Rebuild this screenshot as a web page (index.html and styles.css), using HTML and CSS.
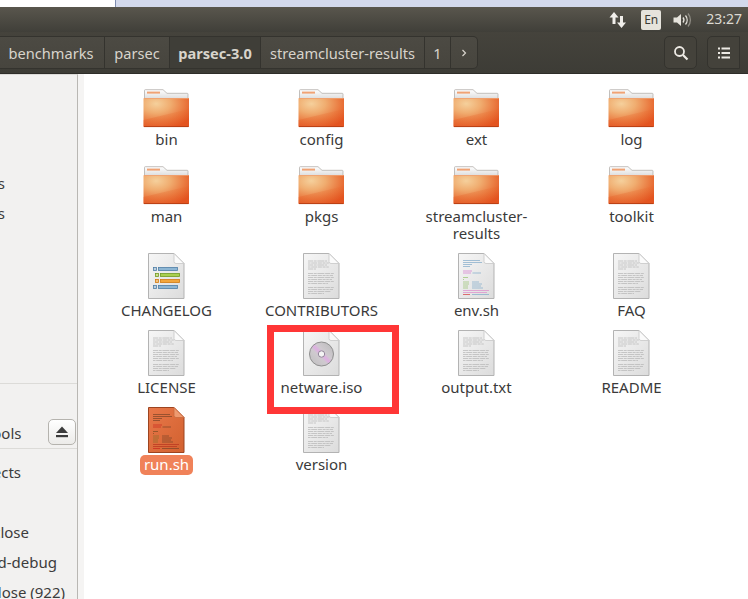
FILE: index.html
```html
<!DOCTYPE html>
<html lang="en">
<head>
  <meta charset="UTF-8" />
  <meta name="viewport" content="width=device-width, initial-scale=1.0"/>
  <title>parsec-3.0</title>
  <link rel="stylesheet" href="styles.css">
</head>
<body>
  <svg class="sprites" width="0" height="0">
    <defs>
      <radialGradient id="folderFront" cx="0.28" cy="0.2" r="0.9">
        <stop offset="0" stop-color="#f5d09c"/>
        <stop offset="0.35" stop-color="#f0ad70"/>
        <stop offset="0.7" stop-color="#ea7a40"/>
        <stop offset="1" stop-color="#e2501e"/>
      </radialGradient>
      <linearGradient id="folderBand" x1="0" y1="1" x2="1" y2="0">
        <stop offset="0" stop-color="#e6602a" stop-opacity="0.4"/>
        <stop offset="1" stop-color="#e8601f" stop-opacity="0.1"/>
      </linearGradient>
      <linearGradient id="folderTab" x1="0" y1="0" x2="0" y2="1">
        <stop offset="0" stop-color="#ffffff"/>
        <stop offset="1" stop-color="#dcdcdc"/>
      </linearGradient>
      <linearGradient id="paper" x1="0" y1="0" x2="1" y2="1">
        <stop offset="0" stop-color="#f6f6f6"/>
        <stop offset="1" stop-color="#dcdcdc"/>
      </linearGradient>
      <linearGradient id="paperRun" x1="0" y1="0" x2="1" y2="1">
        <stop offset="0" stop-color="#e8784a"/>
        <stop offset="1" stop-color="#d2612f"/>
      </linearGradient>
      <linearGradient id="disc" x1="0" y1="1" x2="1" y2="0">
        <stop offset="0" stop-color="#bdbdbd"/>
        <stop offset="0.4" stop-color="#cfcacf"/>
        <stop offset="0.5" stop-color="#deaee2"/>
        <stop offset="0.6" stop-color="#cfcacf"/>
        <stop offset="1" stop-color="#b8b8b8"/>
      </linearGradient>

      <symbol id="i-folder" viewBox="0 0 48 48">
        <path d="M1.500 6.500a.8.8 0 0 1 .8-.8H20l4 3.600h20.200a.8.8 0 0 1 .8.800V15H1.500z" fill="url(#folderTab)" stroke="#b4b0ac" stroke-width=".8"/>
        <rect x="4" y="7.600" width="13" height="2" fill="#f0a274"/>
        <rect x="0.500" y="14" width="45.500" height="29" rx=".8" fill="url(#folderFront)"/>
        <path d="M0.500 36 46 25V43H0.500z" fill="url(#folderBand)"/>
        <path d="M1 42.600H45.500" stroke="#b23c12" stroke-width=".9"/>
        <path d="M1 14.500H45.500" stroke="#f0a070" stroke-width=".8"/>
      </symbol>

      <symbol id="i-page" viewBox="0 0 48 48">
        <path d="M5.500 1.500H31L41 11.500V46.500H5.500z" fill="url(#paper)" stroke="#b3b3b3"/>
        <path d="M31 1.500V9.500a2 2 0 0 0 2 2H41z" fill="#fbfbfb" stroke="#c6c6c6" stroke-width=".8"/>
      </symbol>

      <symbol id="i-text" viewBox="0 0 48 48">
        <use href="#i-page"/>
        <g stroke="#b4b4b4" stroke-width=".7" stroke-dasharray="5 .7 3 .7 7 .7">
          <path d="M10 9H29M10 13H29M10 17H18"/>
          <path d="M10 21.500H36M10 25.500H36M10 29.500H36"/>
          <path d="M10 35.500H36M10 39.500H33"/>
        </g>
        <g stroke="#b4b4b4" stroke-width=".7" stroke-dasharray="2.500 .7 6 .7 4 .7 3 .7">
          <path d="M10 11H31M10 15H31"/>
          <path d="M10 23.500H35M10 27.500H34M10 31.500H30"/>
          <path d="M10 37.500H35M10 41.500H26"/>
        </g>
      </symbol>

      <symbol id="i-log" viewBox="0 0 48 48">
        <use href="#i-page"/>
        <g stroke-width=".8">
          <rect x="10.500" y="15.500" width="3" height="3" fill="#bcd0e0" stroke="#4f7ea6"/>
          <rect x="15.500" y="15.500" width="19" height="3" fill="#8db6d4" stroke="#4f7ea6"/>
          <rect x="12.500" y="21.500" width="3" height="3" fill="#cfe08a" stroke="#6f9a22"/>
          <rect x="17.500" y="21.500" width="19" height="3" fill="#a9cf4e" stroke="#6f9a22"/>
          <rect x="12.500" y="27.500" width="3" height="3" fill="#f5c27a" stroke="#d07a12"/>
          <rect x="17.500" y="27.500" width="19" height="3" fill="#f2a63c" stroke="#d07a12"/>
          <rect x="10.500" y="33.500" width="3" height="3" fill="#bcd0e0" stroke="#4f7ea6"/>
          <rect x="15.500" y="33.500" width="19" height="3" fill="#8db6d4" stroke="#4f7ea6"/>
        </g>
      </symbol>

      <symbol id="i-script" viewBox="0 0 48 48">
        <use href="#i-page"/>
        <g stroke-width=".7">
          <path d="M10 8.500H27M10 10.500H29M10 12.500H19M10 14.500H17" stroke="#7fa9c9"/>
          <path d="M10 19H19" stroke="#d479ce"/>
          <path d="M10 21H18" stroke="#d479ce"/>
          <path d="M19.500 21H28" stroke="#7fa9c9"/>
          <path d="M10 25.500H15M10 27.500H11" stroke="#96c26e"/>
          <path d="M10 30H16M10 32H16M10 34H15M10 36H15" stroke="#96c26e"/>
          <path d="M19 30H26M19 32H29M19 34H28M19 36H30" stroke="#7fa9c9"/>
          <path d="M10 38.500H36" stroke="#dd8acb"/>
          <path d="M10 40.500H34" stroke="#dd8acb"/>
          <path d="M10 42.500H17" stroke="#d43a3a"/>
          <path d="M19 42.500H36" stroke="#7fa9c9"/>
        </g>
      </symbol>

      <symbol id="i-run" viewBox="0 0 48 48">
        <path d="M5.500 1.500H31L41 11.500V46.500H5.500z" fill="url(#paperRun)" stroke="#9c4420"/>
        <path d="M31 1.500V9.500a2 2 0 0 0 2 2H41z" fill="#ee9a70" stroke="#c96a3e" stroke-width=".8"/>
        <g stroke-width=".7">
          <path d="M10 8.500H27M10 10.500H29M10 12.500H19M10 14.500H17" stroke="#7a4426"/>
          <path d="M10 19H19" stroke="#c8261e"/>
          <path d="M10 21H18" stroke="#c8261e"/>
          <path d="M19.500 21H28" stroke="#7a4426"/>
          <path d="M10 25.500H15M10 27.500H11" stroke="#7a4a22"/>
          <path d="M10 30H16M10 32H16M10 34H15M10 36H15" stroke="#8a6a28"/>
          <path d="M19 30H26M19 32H29M19 34H28M19 36H30" stroke="#7a4426"/>
          <path d="M10 38.500H36M10 40.500H34" stroke="#b8321e"/>
          <path d="M10 42.500H17" stroke="#c8261e"/>
          <path d="M19 42.500H36" stroke="#7a4426"/>
        </g>
      </symbol>

      <symbol id="i-disc" viewBox="0 0 48 48">
        <use href="#i-page"/>
        <circle cx="23.500" cy="25" r="12" fill="url(#disc)" stroke="#8f8f8f"/>
        <circle cx="23.500" cy="25" r="3.200" fill="#f4f4f4" stroke="#93869a"/>
      </symbol>
    </defs>
  </svg>

  <div class="screen">
    <div class="strip">
      <div class="strip-left"></div>
      <div class="strip-right"></div>
    </div>

    <div class="panel">
      <svg class="tray-arrows" width="20" height="18" viewBox="0 0 20 18">
        <path d="M6 1 1.500 6.500H4.500V13H7.500V6.500H10.500z" fill="#f0eeea"/>
        <path d="M13.500 17 18 11.500H15V5H12V11.500H9z" fill="#f0eeea"/>
      </svg>
      <span class="lang">En</span>
      <svg class="tray-sound" width="20" height="18" viewBox="0 0 20 18">
        <path d="M0.500 6.500H4L8 3V15L4 11.500H0.500z" fill="#e6e3dc"/>
        <path d="M10 6.500a4 4 0 0 1 0 5M12.500 4.500a7 7 0 0 1 0 9" fill="none" stroke="#e6e3dc" stroke-width="1.300"/>
        <path d="M15 2.500a10 10 0 0 1 0 13" fill="none" stroke="#8f8c84" stroke-width="1.300"/>
      </svg>
      <span class="clock">23:27</span>
    </div>

    <div class="toolbar">
      <div class="pathbar">
        <span class="crumb crumb-first">benchmarks</span>
        <span class="crumb crumb-parsec">parsec</span>
        <span class="crumb crumb-active">parsec-3.0</span>
        <span class="crumb crumb-results">streamcluster-results</span>
        <span class="crumb crumb-num">1</span>
        <span class="crumb crumb-more">
          <svg width="8" height="10" viewBox="0 0 8 10"><path d="M2.500 2 5.500 5 2.500 8" fill="none" stroke="#d8d4cc" stroke-width="1.200"/></svg>
        </span>
      </div>
      <div class="tool-actions">
        <span class="tool-btn">
          <svg width="16" height="16" viewBox="0 0 16 16"><circle cx="6.500" cy="6.500" r="4.500" fill="none" stroke="#eeebe5" stroke-width="1.800"/><path d="M10 10 14.500 14.500" stroke="#eeebe5" stroke-width="2.200"/></svg>
        </span>
        <span class="tool-group">
          <span class="tool-btn tool-btn-list">
            <svg width="12" height="12" viewBox="0 0 12 12"><path d="M0 1.500H2M3.500 1.500H12M0 6H2M3.500 6H12M0 10.500H2M3.500 10.500H12" stroke="#eeebe5" stroke-width="2"/></svg>
          </span>
        </span>
      </div>
    </div>

    <div class="main">
      <aside class="sidebar">
        <div class="side-row end-5">Videos</div>
        <div class="side-row end-5">Downloads</div>
        <div class="side-spacer"></div>
        <div class="side-row side-device">
          <span class="side-name">Tools</span>
          <span class="eject">
            <svg width="14" height="12" viewBox="0 0 14 12"><path d="M7 0.500 13 7H1z" fill="#3c3c3c"/><rect x="1" y="9" width="12" height="2.200" fill="#3c3c3c"/></svg>
          </span>
        </div>
        <div class="side-row end-21">Projects</div>
        <div class="side-row"></div>
        <div class="side-row end-29">close</div>
        <div class="side-row end-57">d-debug</div>
        <div class="side-row end-65">close (922)</div>
      </aside>
      <div class="gutter"></div>
      <div class="files">
        <div class="file"><svg class="file-icon icon-folder"><use href="#i-folder"/></svg><span class="file-name">bin</span></div>
        <div class="file"><svg class="file-icon icon-folder"><use href="#i-folder"/></svg><span class="file-name">config</span></div>
        <div class="file"><svg class="file-icon icon-folder"><use href="#i-folder"/></svg><span class="file-name">ext</span></div>
        <div class="file"><svg class="file-icon icon-folder"><use href="#i-folder"/></svg><span class="file-name">log</span></div>

        <div class="file"><svg class="file-icon icon-folder"><use href="#i-folder"/></svg><span class="file-name">man</span></div>
        <div class="file"><svg class="file-icon icon-folder"><use href="#i-folder"/></svg><span class="file-name">pkgs</span></div>
        <div class="file"><svg class="file-icon icon-folder"><use href="#i-folder"/></svg><span class="file-name">streamcluster-<br>results</span></div>
        <div class="file"><svg class="file-icon icon-folder"><use href="#i-folder"/></svg><span class="file-name">toolkit</span></div>

        <div class="file"><svg class="file-icon icon-doc"><use href="#i-log"/></svg><span class="file-name">CHANGELOG</span></div>
        <div class="file"><svg class="file-icon icon-doc"><use href="#i-text"/></svg><span class="file-name">CONTRIBUTORS</span></div>
        <div class="file"><svg class="file-icon icon-doc"><use href="#i-script"/></svg><span class="file-name">env.sh</span></div>
        <div class="file"><svg class="file-icon icon-doc"><use href="#i-text"/></svg><span class="file-name">FAQ</span></div>

        <div class="file"><svg class="file-icon icon-doc"><use href="#i-text"/></svg><span class="file-name">LICENSE</span></div>
        <div class="file"><svg class="file-icon icon-doc"><use href="#i-disc"/></svg><span class="file-name">netware.iso</span></div>
        <div class="file"><svg class="file-icon icon-doc"><use href="#i-text"/></svg><span class="file-name">output.txt</span></div>
        <div class="file"><svg class="file-icon icon-doc"><use href="#i-text"/></svg><span class="file-name">README</span></div>

        <div class="file"><svg class="file-icon"><use href="#i-run"/></svg><span class="file-name file-selected">run.sh</span></div>
        <div class="file"><svg class="file-icon icon-doc"><use href="#i-text"/></svg><span class="file-name">version</span></div>
      </div>
    </div>

    <div class="callout"></div>
  </div>
</body>
</html>
```

FILE: styles.css
```css
* {
  box-sizing: border-box;
}

body {
  margin: 0;
  font-family: "Noto Sans", "Open Sans", sans-serif;
}

.sprites {
  display: block;
  height: 0;
}

.screen {
  position: relative;
  width: 748px;
  height: 599px;
  overflow: hidden;
  background: #ffffff;
}

/* window behind, top edge */
.strip {
  display: flex;
  height: 7px;
}

.strip-left {
  width: 116px;
  background: #ffffff;
  border-right: 1px solid #7f8db0;
}

.strip-right {
  flex: 1;
  background: #d3d9ec;
}

/* unity panel */
.panel {
  display: flex;
  justify-content: flex-end;
  align-items: center;
  height: 25px;
  padding-right: 6px;
  background: linear-gradient(to bottom, #59564d, #403f39);
}

.tray-arrows {
  margin-right: 13px;
}

.lang {
  display: flex;
  justify-content: center;
  align-items: center;
  width: 20px;
  height: 20px;
  border-radius: 2px;
  background: #e6e3dc;
  color: #3c3b35;
  font-size: 12px;
  margin-right: 12px;
}

.tray-sound {
  margin-right: 13px;
}

.clock {
  margin-top: -2px;
  color: #dcd9d2;
  font-size: 14px;
}

/* nautilus toolbar */
.toolbar {
  display: flex;
  justify-content: space-between;
  align-items: center;
  height: 42px;
  background: linear-gradient(to bottom, #45433c, #3d3c36);
  border-bottom: 1px solid #2e2d29;
}

.pathbar {
  display: flex;
  height: 33px;
}

.crumb {
  display: flex;
  justify-content: center;
  align-items: center;
  height: 33px;
  color: #d8d4cc;
  font-size: 14.600px;
  background: linear-gradient(to bottom, #4c4a43, #47453e);
  border: 1px solid #34332e;
  border-left: none;
}

.crumb-first {
  width: 105px;
  padding-right: 2px;
}

.crumb-parsec {
  width: 65px;
}

.crumb-active {
  width: 91px;
  font-weight: 700;
  background: #3f3e38;
}

.crumb-results {
  width: 164px;
}

.crumb-num {
  width: 26px;
}

.crumb-more {
  width: 27px;
  border-radius: 0 5px 5px 0;
}

.tool-actions {
  display: flex;
  gap: 10px;
  margin-right: -1px;
}

.tool-btn {
  display: flex;
  justify-content: center;
  align-items: center;
  width: 33px;
  height: 33px;
  border: 1px solid #34332e;
  border-radius: 5px;
  background: #44423b;
}

.tool-group {
  display: flex;
  width: 42px;
}

.tool-btn-list {
  width: 33px;
  border-radius: 5px 0 0 5px;
}

/* content */
.main {
  display: flex;
  height: 525px;
}

.sidebar {
  display: flex;
  flex-direction: column;
  width: 78px;
  padding-top: 93px;
  background: #f2f1f0;
  border-right: 1px solid #b9b7b3;
  border-top: 1px solid #dcdbd8;
  overflow: hidden;
}

.side-row {
  display: flex;
  justify-content: flex-end;
  align-items: center;
  flex: none;
  height: 30px;
  color: #3c3c3c;
  font-size: 15px;
  white-space: nowrap;
}

.side-spacer {
  flex: none;
  height: 156px;
  border-bottom: 1px solid #dcdbd8;
  margin-bottom: 35px;
}

.side-device {
  justify-content: space-between;
  height: 34px;
  margin-top: -4px;
  margin-bottom: 8px;
  padding-right: 1px;
  border-bottom: 1px solid #dcdbd8;
}

.side-name {
  margin-top: 3px;
  margin-left: -15px;
}

.eject {
  display: flex;
  justify-content: center;
  align-items: center;
  width: 28px;
  height: 26px;
  background: linear-gradient(to bottom, #ffffff, #ecebe9);
  border: 1px solid #b5b3ae;
  border-radius: 5px;
}

.end-5 {
  padding-right: 72px;
}

.end-21 {
  padding-right: 56px;
}

.end-29 {
  padding-right: 48px;
}

.end-57 {
  padding-right: 20px;
}

.end-65 {
  padding-right: 12px;
}

.gutter {
  width: 6px;
  background: #f5f4f3;
}

.files {
  display: grid;
  grid-template-columns: repeat(4, 155px);
  grid-template-rows: 77px 91px 77px 77px 77px;
  align-content: start;
  padding: 10px 0 0 5px;
}

.file {
  display: flex;
  flex-direction: column;
  align-items: center;
}

.file-icon {
  flex: none;
  width: 48px;
  height: 48px;
}

.icon-folder {
  margin-bottom: -1px;
}

.icon-doc {
  margin-bottom: 2px;
}

.file-name {
  color: #3a3a3a;
  font-size: 15px;
  line-height: 17px;
  text-align: center;
  white-space: nowrap;
}

.file-selected {
  margin-top: 1px;
  padding: 1px 4px 2px;
  border-radius: 5px;
  background: #f08259;
  color: #ffffff;
}

/* red annotation drawn on the screenshot */
.callout {
  position: absolute;
  left: 267px;
  top: 325px;
  width: 132px;
  height: 89px;
  border: 7px solid #ff3636;
}
```
